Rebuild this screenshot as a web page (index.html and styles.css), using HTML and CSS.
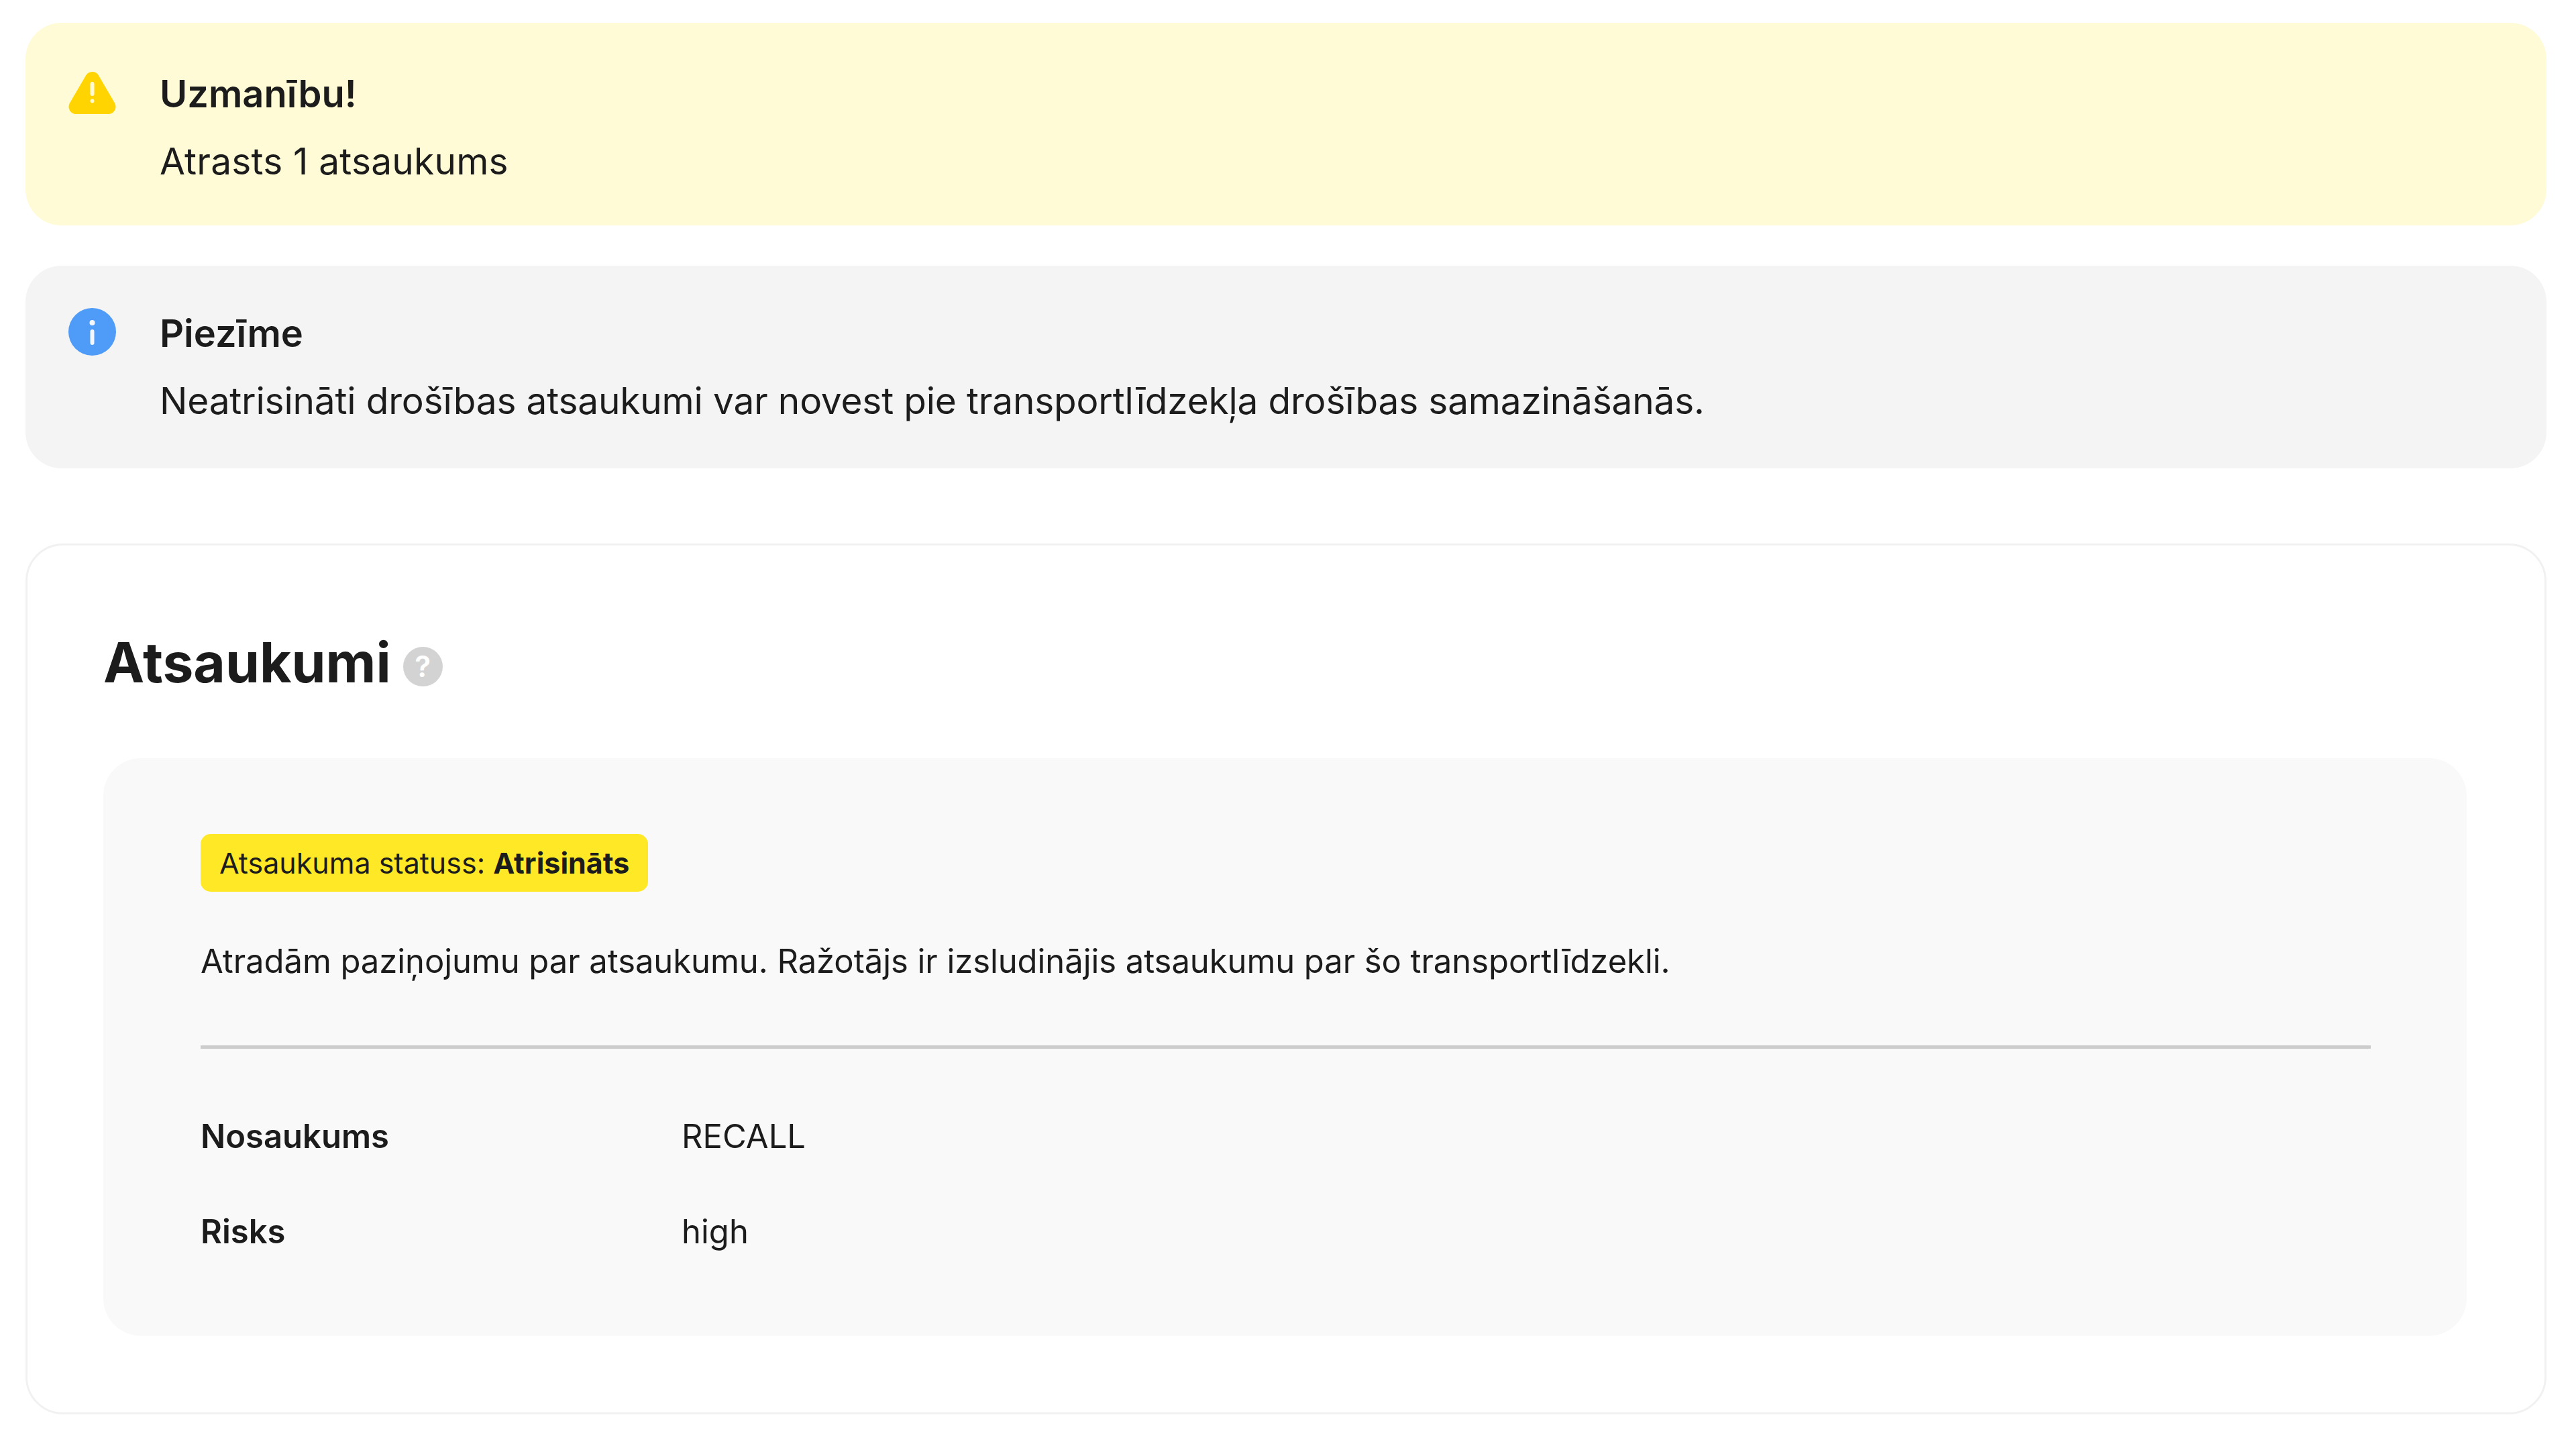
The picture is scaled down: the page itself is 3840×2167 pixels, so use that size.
FILE: index.html
```html
<!DOCTYPE html>
<html>
<head>
	<title>Atsaukumi</title>
	<meta charset="utf-8">
	<link rel="stylesheet" href="styles.css">
</head>
<body>
	<div class="alert alert-warn">
		<svg class="alert-icon" width="71" height="65" viewBox="0 0 71 65">
			<path d="M35.5 12 L11.5 53 L59.5 53 Z" fill="#ffd400" stroke="#ffd400" stroke-width="22" stroke-linejoin="round"/>
			<rect x="32.5" y="16" width="6" height="21" rx="3" fill="#fff9d6"/>
			<circle cx="35.5" cy="44.5" r="3" fill="#fff9d6"/>
		</svg>
		<div>
			<div class="alert-title">Uzmanību!</div>
			<div class="alert-text">Atrasts 1 atsaukums</div>
		</div>
	</div>
	<div class="alert alert-note">
		<svg class="alert-icon" width="71" height="71" viewBox="0 0 71 71">
			<circle cx="35.5" cy="35.5" r="35.5" fill="#4e9bf8"/>
			<circle cx="35.5" cy="22" r="4" fill="#f4f8fe"/>
			<rect x="32.5" y="32" width="6" height="23" rx="3" fill="#f4f8fe"/>
		</svg>
		<div>
			<div class="alert-title">Piezīme</div>
			<div class="alert-text">Neatrisināti drošības atsaukumi var novest pie transportlīdzekļa drošības samazināšanās.</div>
		</div>
	</div>
	<div class="card">
		<h1 class="card-title">Atsaukumi<span class="help">?</span></h1>
		<div class="recall">
			<div class="badge">Atsaukuma statuss: <b>Atrisināts</b></div>
			<p class="recall-text">Atradām paziņojumu par atsaukumu. Ražotājs ir izsludinājis atsaukumu par šo transportlīdzekli.</p>
			<div class="recall-line"></div>
			<div class="rows">
				<div class="row-name">Nosaukums</div>
				<div>RECALL</div>
				<div class="row-name">Risks</div>
				<div>high</div>
			</div>
		</div>
	</div>
</body>
</html>
```

FILE: styles.css
```css
*{margin:0;padding:0;box-sizing:border-box;}
body{background:#fff;color:#1c1c1c;font-family:Inter,'Liberation Sans',sans-serif;padding:34px 44px 0 38px;}

/* alerts */
.alert{display:flex;height:302px;border-radius:54px;padding:56px 64px 0;gap:65px;}
.alert-warn{background:#fffbd6;margin-bottom:60px;}
.alert-note{background:#f4f4f4;padding-top:51px;}
.alert-icon{flex:none;margin-top:16px;}
.alert-note .alert-icon{margin-top:12px;}
.alert-title{font-size:56px;line-height:100px;font-weight:600;}
.alert-text{font-size:55px;line-height:100px;letter-spacing:-0.2px;}
.alert-warn .alert-text{letter-spacing:0.2px;}

/* card */
.card{margin-top:112px;border:3px solid #f1f1f1;border-radius:56px;padding:115px 116px 114px 113px;}
.card-title{font-size:82px;line-height:120px;font-weight:700;margin-bottom:82px;display:flex;align-items:center;}
.help{width:59px;height:59px;border-radius:50%;background:#d3d3d3;color:#fff;font-size:44px;font-weight:600;line-height:59px;text-align:center;margin:10px 0 0 18px;}
.recall{background:#f9f9f9;border-radius:56px;padding:113px 143px 115px 145px;font-size:49px;line-height:80px;}
.badge{display:inline-block;height:86px;line-height:86px;padding:0 28px;background:#ffe926;border-radius:15px;font-size:43px;vertical-align:top;}
.badge b{font-weight:700;}
.recall-text{margin-top:64px;letter-spacing:-0.08px;}
.recall-line{height:5px;background:#ccc;margin:85px 0 91px;}
.rows{display:grid;grid-template-columns:717px 1fr;row-gap:62px;}
.row-name{font-weight:600;}
```
